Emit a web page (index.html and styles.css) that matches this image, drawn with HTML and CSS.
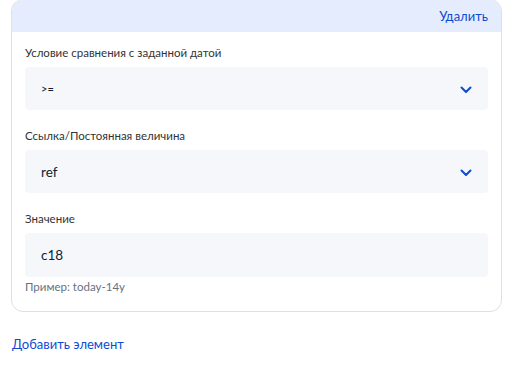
FILE: index.html
```html
<!DOCTYPE html>
<html lang="ru">
<head>
<meta charset="utf-8">
<link rel="stylesheet" href="styles.css">
</head>
<body>
<div class="page">
  <div class="card">
    <div class="card-head">
      <a class="link del">Удалить</a>
    </div>
    <div class="card-body">
      <div class="field">
        <div class="label">Условие сравнения с заданной датой</div>
        <div class="select">
          <span class="value small">&gt;=</span>
          <svg class="chev" width="12" height="8" viewBox="0 0 12 8"><path d="M1.5 1.5 L6 6 L10.5 1.5" fill="none" stroke="#0d4cd3" stroke-width="2" stroke-linecap="round" stroke-linejoin="round"/></svg>
        </div>
      </div>
      <div class="field">
        <div class="label">Ссылка/Постоянная величина</div>
        <div class="select">
          <span class="value">ref</span>
          <svg class="chev" width="12" height="8" viewBox="0 0 12 8"><path d="M1.5 1.5 L6 6 L10.5 1.5" fill="none" stroke="#0d4cd3" stroke-width="2" stroke-linecap="round" stroke-linejoin="round"/></svg>
        </div>
      </div>
      <div class="field">
        <div class="label">Значение</div>
        <div class="input"><span class="value">c18</span></div>
        <div class="hint">Пример: today-14y</div>
      </div>
    </div>
  </div>
  <a class="link add">Добавить элемент</a>
</div>
</body>
</html>
```
FILE: styles.css
```css
* { box-sizing: border-box; }
html, body { margin: 0; padding: 0; background: #fff; }
body { font-family: Lato, "Noto Sans", sans-serif; color: #0b1f33; }
.page { padding: 0 19px 0 11px; }
.card {
  border: 1px solid #e0e0e0;
  border-radius: 12px;
  overflow: hidden;
  margin-top: -1px;
}
.card-head {
  background: #e4ecfd;
  height: 32px;
  display: flex;
  justify-content: flex-end;
  align-items: center;
  padding: 0 13px 0 0;
}
.link { color: #0d4cd3; font-size: 13px; cursor: pointer; }
.del { font-size: 13px; }
.card-body { padding: 13px 13px 16px 13px; display: flex; flex-direction: column; gap: 18px; }
.field { display: flex; flex-direction: column; }
.label { font-size: 11.5px; line-height: 16px; color: #333; margin-bottom: 6px; }
.select, .input {
  background: #f5f7fa;
  border-radius: 4px;
  height: 43px;
  display: flex;
  align-items: center;
  justify-content: space-between;
  padding: 0 16px 0 16px;
}
.input { height: 44px; }
.value { font-size: 13.5px; color: #0b1f33; }
.value.small { font-size: 11px; }
.chev { display: block; margin-top: 2px; }
.hint { font-size: 11.5px; color: #66727f; margin-top: 2px; line-height: 16px; }
.add { display: block; margin-top: 24px; margin-left: 1px; font-size: 13px; }
```
